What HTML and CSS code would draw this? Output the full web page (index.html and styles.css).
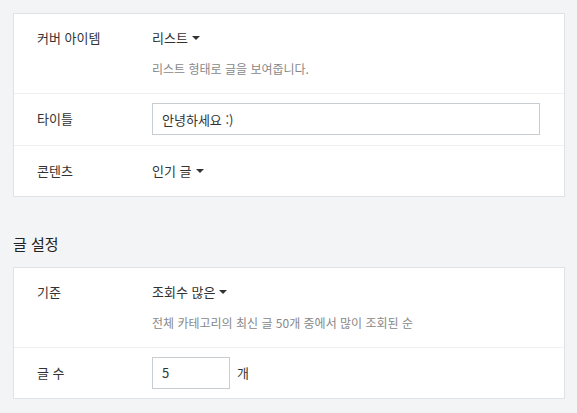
FILE: index.html
```html
<!DOCTYPE html>
<html lang="ko">
<head>
    <meta charset="UTF-8">
    <meta name="viewport" content="width=device-width, initial-scale=1.0">
    <title>커버 설정</title>
    <link rel="stylesheet" href="styles.css">
</head>
<body>
    <div class="settings">
        <div class="panel">
            <div class="row row-tall">
                <div class="label">커버 아이템</div>
                <div class="field">
                    <div class="select">리스트 <span class="caret"></span></div>
                    <p class="desc">리스트 형태로 글을 보여줍니다.</p>
                </div>
            </div>
            <div class="row">
                <div class="label">타이틀</div>
                <div class="field">
                    <input class="text-input wide" type="text" value="안녕하세요 :)">
                </div>
            </div>
            <div class="row">
                <div class="label">콘텐츠</div>
                <div class="field">
                    <div class="select">인기 글 <span class="caret"></span></div>
                </div>
            </div>
        </div>

        <h3 class="section-title">글 설정</h3>

        <div class="panel">
            <div class="row row-tall">
                <div class="label">기준</div>
                <div class="field">
                    <div class="select">조회수 많은 <span class="caret"></span></div>
                    <p class="desc">전체 카테고리의 최신 글 50개 중에서 많이 조회된 순</p>
                </div>
            </div>
            <div class="row">
                <div class="label">글 수</div>
                <div class="field inline">
                    <input class="text-input short" type="text" value="5">
                    <span class="unit">개</span>
                </div>
            </div>
        </div>
    </div>
</body>
</html>
```

FILE: styles.css
```css
body {
    margin: 0;
    background: #f3f4f6;
    font-family: "Noto Sans CJK KR", "Noto Sans", sans-serif;
    color: #333;
}
.settings {
    padding: 13px 12px 16px 13px;
}
.panel {
    background: #fff;
    border: 1px solid #dfe2e6;
}
.row {
    display: flex;
    align-items: flex-start;
    padding: 9px 0;
    border-top: 1px solid #eef0f2;
    font-size: 13px;
}
.row:first-child {
    border-top: none;
}
.row-tall {
    padding: 13px 0;
}
.label {
    width: 115px;
    padding-left: 23px;
    flex-shrink: 0;
    line-height: 32px;
}
.field {
    flex: 1;
    line-height: 32px;
}
.field.inline {
    display: flex;
    align-items: center;
}
.row-tall .label,
.row-tall .field {
    line-height: 22px;
}
.select {
    display: flex;
    align-items: center;
    gap: 4px;
}
.caret {
    display: inline-block;
    width: 0;
    height: 0;
    border-left: 4px solid transparent;
    border-right: 4px solid transparent;
    border-top: 4px solid #333;
}
.desc {
    margin: 9px 0 0;
    font-size: 12px;
    line-height: 22px;
    color: #888;
}
.text-input {
    box-sizing: border-box;
    height: 32px;
    border: 1px solid #c8cdd2;
    padding: 0 9px;
    font-family: inherit;
    font-size: 13px;
    color: #333;
    outline: none;
}
.text-input.wide {
    width: 388px;
}
.text-input.short {
    width: 78px;
}
.unit {
    margin-left: 7px;
}
.section-title {
    margin: 36px 0 12px;
    font-size: 15px;
    font-weight: normal;
    color: #222;
    line-height: 22px;
}
```
